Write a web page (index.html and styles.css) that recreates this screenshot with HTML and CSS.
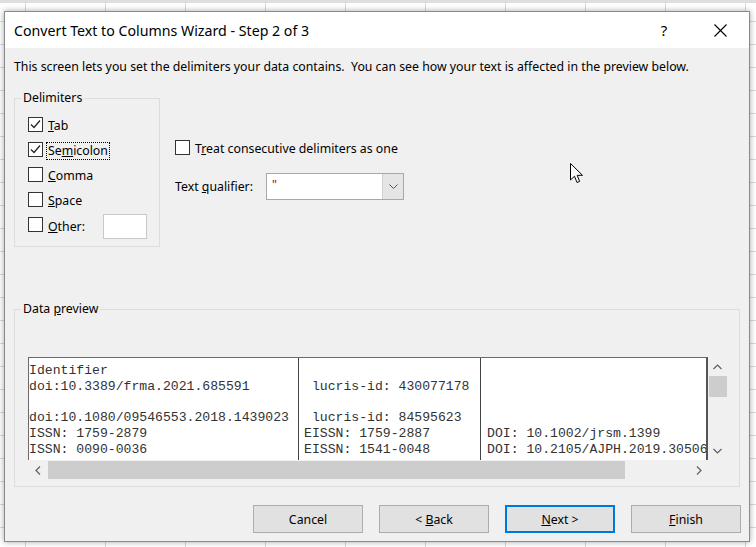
FILE: index.html
```html
<!DOCTYPE html>
<html>
<head>
<meta charset="utf-8">
<title>Convert Text to Columns Wizard - Step 2 of 3</title>
<link rel="stylesheet" href="styles.css">
</head>
<body>
<div class="sheet">
  <div class="dialog">
    <div class="titlebar">
      <span class="title">Convert Text to Columns Wizard - Step 2 of 3</span>
      <span class="tb-btn help">?</span>
      <span class="tb-btn">
        <svg class="close-ico" width="13" height="13" viewBox="0 0 13 13"><path d="M0.5 0.5 L12.5 12.5 M12.5 0.5 L0.5 12.5" stroke="#000" stroke-width="1.1" fill="none"/></svg>
      </span>
    </div>
    <div class="content">
      <p class="desc">This screen lets you set the delimiters your data contains.&nbsp; You can see how your text is affected in the preview below.</p>
      <div class="options">
        <fieldset class="group delims">
          <legend>Delimiters</legend>
          <div class="cb">
            <span class="box"><svg width="11" height="11" viewBox="0 0 11 11"><path d="M1 5.5 L4 8.5 L10 1.5" stroke="#222" stroke-width="1.2" fill="none"/></svg></span>
            <span class="lbl"><u>T</u>ab</span>
          </div>
          <div class="cb">
            <span class="box"><svg width="11" height="11" viewBox="0 0 11 11"><path d="M1 5.5 L4 8.5 L10 1.5" stroke="#222" stroke-width="1.2" fill="none"/></svg></span>
            <span class="lbl focus">Se<u>m</u>icolon</span>
          </div>
          <div class="cb">
            <span class="box"></span>
            <span class="lbl"><u>C</u>omma</span>
          </div>
          <div class="cb">
            <span class="box"></span>
            <span class="lbl"><u>S</u>pace</span>
          </div>
          <div class="cb">
            <span class="box"></span>
            <span class="lbl lbl-other"><u>O</u>ther:</span>
            <span class="other-input"></span>
          </div>
        </fieldset>
        <div class="opts-right">
          <div class="cb cb-plain">
            <span class="box"></span>
            <span class="lbl">T<u>r</u>eat consecutive delimiters as one</span>
          </div>
          <div class="qual">
            <span class="qual-label">Text <u>q</u>ualifier:</span>
            <div class="combo">
              <span class="combo-val">"</span>
              <span class="combo-btn"><svg width="9" height="6" viewBox="0 0 9 6"><path d="M0.5 0.5 L4.5 4.5 L8.5 0.5" stroke="#555" stroke-width="1" fill="none"/></svg></span>
            </div>
          </div>
        </div>
      </div>
      <fieldset class="group pgroup">
        <legend>Data <u>p</u>review</legend>
        <div class="preview">
          <div class="pv-data">
            <div class="col c1">Identifier
doi:10.3389/frma.2021.685591

doi:10.1080/09546553.2018.1439023
ISSN: 1759-2879
ISSN: 0090-0036</div>
            <div class="col c2">
 lucris-id: 430077178

 lucris-id: 84595623
EISSN: 1759-2887
EISSN: 1541-0048</div>
            <div class="col c3">



DOI: 10.1002/jrsm.1399
DOI: 10.2105/AJPH.2019.305062</div>
          </div>
          <div class="vscroll">
            <span class="sb-btn"><svg width="9" height="6" viewBox="0 0 9 6"><path d="M0.5 5 L4.5 1 L8.5 5" stroke="#606060" stroke-width="1.2" fill="none"/></svg></span>
            <span class="vs-thumb"></span>
            <span class="sb-fill"></span>
            <span class="sb-btn"><svg width="9" height="6" viewBox="0 0 9 6"><path d="M0.5 1 L4.5 5 L8.5 1" stroke="#606060" stroke-width="1.2" fill="none"/></svg></span>
          </div>
          <div class="hscroll">
            <span class="sb-btn hs-btn"><svg width="6" height="9" viewBox="0 0 6 9"><path d="M5 0.5 L1 4.5 L5 8.5" stroke="#606060" stroke-width="1.2" fill="none"/></svg></span>
            <span class="hs-thumb"></span>
            <span class="sb-fill"></span>
            <span class="sb-btn hs-btn"><svg width="6" height="9" viewBox="0 0 6 9"><path d="M1 0.5 L5 4.5 L1 8.5" stroke="#606060" stroke-width="1.2" fill="none"/></svg></span>
          </div>
          <div class="corner"></div>
        </div>
      </fieldset>
      <div class="buttons">
        <span class="btn">Cancel</span>
        <span class="btn">&lt; <u>B</u>ack</span>
        <span class="btn default"><u>N</u>ext &gt;</span>
        <span class="btn"><u>F</u>inish</span>
      </div>
    </div>
  </div>
  <svg class="cursor" width="14" height="21" viewBox="0 0 14 21"><path d="M0.5 0.5 V17 L4.5 13.2 L7 19.5 L9.6 18.4 L7.2 12.3 H12.5 Z" fill="#fff" stroke="#000" stroke-width="1"/></svg>
</div>
</body>
</html>
```
FILE: styles.css
```css
* { box-sizing: border-box; }
html, body { margin: 0; padding: 0; }
body {
  width: 756px;
  height: 547px;
  overflow: hidden;
  font-family: "Noto Sans", "Open Sans", sans-serif;
  color: #000;
}
.sheet {
  position: relative;
  width: 756px;
  height: 547px;
  padding: 11px 0 0 4px;
  background-color: #fff;
  background-image:
    linear-gradient(#dedede, #dedede),
    repeating-linear-gradient(to bottom, transparent 0 21px, #d9d9d9 21px 22px, transparent 22px 23px),
    repeating-linear-gradient(to right, transparent 0 25px, #d9d9d9 25px 26px, transparent 26px 80px);
  background-size: 100% 3px, auto, auto;
  background-repeat: no-repeat, repeat, repeat;
}
.dialog {
  width: 746px;
  height: 531px;
  border: 1px solid #8a8a8a;
  box-shadow: 0 0 6px rgba(0, 0, 0, 0.35);
  background: #f0f0f0;
  display: flex;
  flex-direction: column;
}
.titlebar {
  height: 36px;
  flex: none;
  background: #fff;
  display: flex;
  align-items: center;
  padding: 0 6px 0 9px;
}
.title {
  flex: 1;
  font-size: 14.2px;
  white-space: nowrap;
  padding-top: 1px;
}
.tb-btn {
  width: 46px;
  height: 36px;
  display: flex;
  align-items: center;
  justify-content: center;
}
.help { font-size: 15px; margin-right: 10px; }
.content {
  flex: 1;
  padding: 0 9px;
  font-size: 12.3px;
  line-height: 16px;
}
.desc {
  margin: 11px 0 0;
  white-space: nowrap;
}
.options {
  display: flex;
  align-items: flex-start;
  margin-top: 15px;
}
fieldset.group {
  margin: 0;
  min-width: 0;
  border: 1px solid #dcdcdc;
  padding: 0 0 0 6px;
}
.group legend {
  padding: 0 2px;
  line-height: 16px;
}
.delims {
  width: 146px;
  padding-top: 6px !important;
  padding-bottom: 9px !important;
}
.cb {
  display: flex;
  align-items: flex-start;
  height: 25px;
  margin-left: 7px;
  gap: 3px;
}
.cb-plain { margin-left: 0; }
.box {
  flex: none;
  width: 15px;
  height: 15px;
  margin-top: 5px;
  border: 1px solid #333;
  background: #fff;
  display: flex;
  align-items: center;
  justify-content: center;
}
.lbl {
  margin-top: 5px;
  border: 1px solid transparent;
  padding: 0 1px;
  line-height: 16px;
  white-space: nowrap;
}
.lbl.focus { border: 1px dotted #000; }
.lbl-other { width: 54px; margin-top: 6px; }
.other-input {
  width: 44px;
  height: 25px;
  margin-top: 2px;
  background: #fff;
  border: 1px solid #c8c8c8;
}
.opts-right {
  margin-left: 15px;
  padding-top: 45px;
}
.qual {
  display: flex;
  align-items: center;
  margin-top: 13px;
}
.qual-label { width: 91px; }
.combo {
  width: 138px;
  height: 27px;
  border: 1px solid #a8a8a8;
  background: #fff;
  display: flex;
}
.combo-val {
  flex: 1;
  color: #b00020;
  padding-left: 5px;
  line-height: 22px;
}
.combo-btn {
  width: 21px;
  background: #e5e5e5;
  border-left: 1px solid #d0d0d0;
  display: flex;
  align-items: center;
  justify-content: center;
}
.pgroup {
  margin-top: 54px !important;
  padding-top: 40px !important;
  padding-bottom: 6px !important;
}
.preview {
  margin-left: 7px;
  display: grid;
  grid-template-columns: 680px 19px;
  grid-template-rows: 103px 20px;
}
.pv-data {
  display: flex;
  overflow: hidden;
  background: #fff;
  border-top: 1px solid #6a6a6a;
  border-left: 1px solid #6a6a6a;
  border-right: 2px solid #555;
  font-family: "Liberation Mono", "Courier New", monospace;
  font-size: 13.13px;
  line-height: 15.8px;
  color: #333;
}
.col {
  flex: none;
  height: 100%;
  padding-top: 5px;
  white-space: pre;
}
.c1 { width: 269px; }
.c2 { width: 182px; border-left: 1px solid #444; padding-left: 5px; }
.c3 { border-left: 1px solid #444; padding-left: 6px; }
.vscroll {
  display: flex;
  flex-direction: column;
}
.sb-btn {
  flex: none;
  height: 19px;
  display: flex;
  align-items: center;
  justify-content: center;
}
.vs-thumb {
  flex: none;
  height: 21px;
  margin-left: 1px;
  background: #cdcdcd;
}
.sb-fill { flex: 1; }
.hscroll { display: flex; }
.hs-btn { width: 19px; height: 20px; }
.hs-thumb {
  flex: none;
  width: 577px;
  margin: 1px 0 1px 1px;
  background: #cdcdcd;
}
.buttons {
  display: flex;
  justify-content: flex-end;
  gap: 16px;
  margin: 18px -1px 0 0;
}
.btn {
  width: 110px;
  height: 28px;
  border: 1px solid #adadad;
  background: #e1e1e1;
  display: flex;
  align-items: center;
  justify-content: center;
  white-space: pre;
  padding-top: 1px;
}
.btn.default { border: 2px solid #0078d7; }
.cursor {
  position: absolute;
  left: 570px;
  top: 163px;
}
```
